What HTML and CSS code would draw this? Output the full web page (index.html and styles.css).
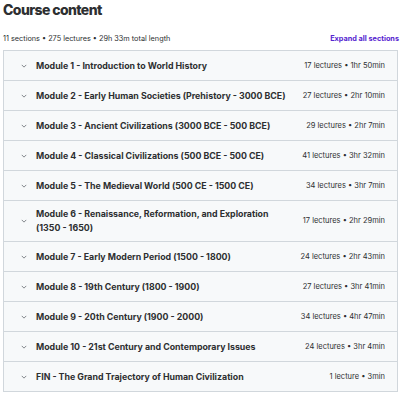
FILE: index.html
```html
<!DOCTYPE html>
<html>
<head>
  <title>Course content</title>
  <link rel="stylesheet" href="styles.css">
</head>
<body>
  <div class="curriculum">
    <h2>Course content</h2>
    <div class="summary">
      <span>11 sections • 275 lectures • 29h 33m total length</span>
      <a href="#" class="expand">Expand all sections</a>
    </div>

    <div class="sections">
      <div class="section">
        <svg class="chevron" viewBox="0 0 8 5"><path d="M1 1l3 3 3-3"/></svg>
        <span class="section-title">Module 1 - Introduction to World History</span>
        <span class="section-meta">17 lectures • 1hr 50min</span>
      </div>
      <div class="section">
        <svg class="chevron" viewBox="0 0 8 5"><path d="M1 1l3 3 3-3"/></svg>
        <span class="section-title">Module 2 - Early Human Societies (Prehistory - 3000 BCE)</span>
        <span class="section-meta">27 lectures • 2hr 10min</span>
      </div>
      <div class="section">
        <svg class="chevron" viewBox="0 0 8 5"><path d="M1 1l3 3 3-3"/></svg>
        <span class="section-title">Module 3 - Ancient Civilizations (3000 BCE - 500 BCE)</span>
        <span class="section-meta">29 lectures • 2hr 7min</span>
      </div>
      <div class="section">
        <svg class="chevron" viewBox="0 0 8 5"><path d="M1 1l3 3 3-3"/></svg>
        <span class="section-title">Module 4 - Classical Civilizations (500 BCE - 500 CE)</span>
        <span class="section-meta">41 lectures • 3hr 32min</span>
      </div>
      <div class="section">
        <svg class="chevron" viewBox="0 0 8 5"><path d="M1 1l3 3 3-3"/></svg>
        <span class="section-title">Module 5 - The Medieval World (500 CE - 1500 CE)</span>
        <span class="section-meta">34 lectures • 3hr 7min</span>
      </div>
      <div class="section">
        <svg class="chevron" viewBox="0 0 8 5"><path d="M1 1l3 3 3-3"/></svg>
        <span class="section-title">Module 6 - Renaissance, Reformation, and Exploration (1350 - 1650)</span>
        <span class="section-meta">17 lectures • 2hr 29min</span>
      </div>
      <div class="section">
        <svg class="chevron" viewBox="0 0 8 5"><path d="M1 1l3 3 3-3"/></svg>
        <span class="section-title">Module 7 - Early Modern Period (1500 - 1800)</span>
        <span class="section-meta">24 lectures • 2hr 43min</span>
      </div>
      <div class="section">
        <svg class="chevron" viewBox="0 0 8 5"><path d="M1 1l3 3 3-3"/></svg>
        <span class="section-title">Module 8 - 19th Century (1800 - 1900)</span>
        <span class="section-meta">27 lectures • 3hr 41min</span>
      </div>
      <div class="section">
        <svg class="chevron" viewBox="0 0 8 5"><path d="M1 1l3 3 3-3"/></svg>
        <span class="section-title">Module 9 - 20th Century (1900 - 2000)</span>
        <span class="section-meta">34 lectures • 4hr 47min</span>
      </div>
      <div class="section">
        <svg class="chevron" viewBox="0 0 8 5"><path d="M1 1l3 3 3-3"/></svg>
        <span class="section-title">Module 10 - 21st Century and Contemporary Issues</span>
        <span class="section-meta">24 lectures • 3hr 4min</span>
      </div>
      <div class="section">
        <svg class="chevron" viewBox="0 0 8 5"><path d="M1 1l3 3 3-3"/></svg>
        <span class="section-title">FIN - The Grand Trajectory of Human Civilization</span>
        <span class="section-meta">1 lecture • 3min</span>
      </div>
    </div>
  </div>
</body>
</html>
```

FILE: styles.css
```css
/* Course curriculum */

body {
    margin: 0;
    padding: 0;
    font-family: Inter, "Noto Sans", sans-serif;
    color: #2d2f31;
    background: #fff;
}

.curriculum {
    padding: 0 0 0 3px;
    overflow: hidden;
}

.curriculum h2 {
    margin: 0;
    padding: 0;
    font-size: 14px;
    line-height: 20px;
    font-weight: 800;
    letter-spacing: -0.6px;
}

.summary {
    display: flex;
    justify-content: space-between;
    align-items: baseline;
    margin-top: 13px;
    font-size: 7.3px;
    line-height: 12px;
}

.expand {
    color: #5624d0;
    font-weight: 700;
    text-decoration: none;
    margin-right: 1px;
}

.sections {
    margin-top: 5px;
    margin-right: 2px;
    border: 1px solid #d1d7dc;
    border-top: none;
}

.section {
    display: flex;
    align-items: center;
    box-sizing: border-box;
    min-height: 30px;
    padding: 6px 12px 6px 17px;
    border-top: 1px solid #d1d7dc;
    background: #f7f9fa;
    font-size: 8.8px;
    line-height: 14px;
}

.chevron {
    width: 6px;
    height: 4px;
    flex: none;
    margin-right: 9px;
    fill: none;
    stroke: #6a6f73;
    stroke-width: 1.1;
}

.section-title {
    flex: 1;
    font-weight: 700;
}

.section-meta {
    flex: none;
    margin-left: 12px;
    font-size: 7.5px;
}
```
